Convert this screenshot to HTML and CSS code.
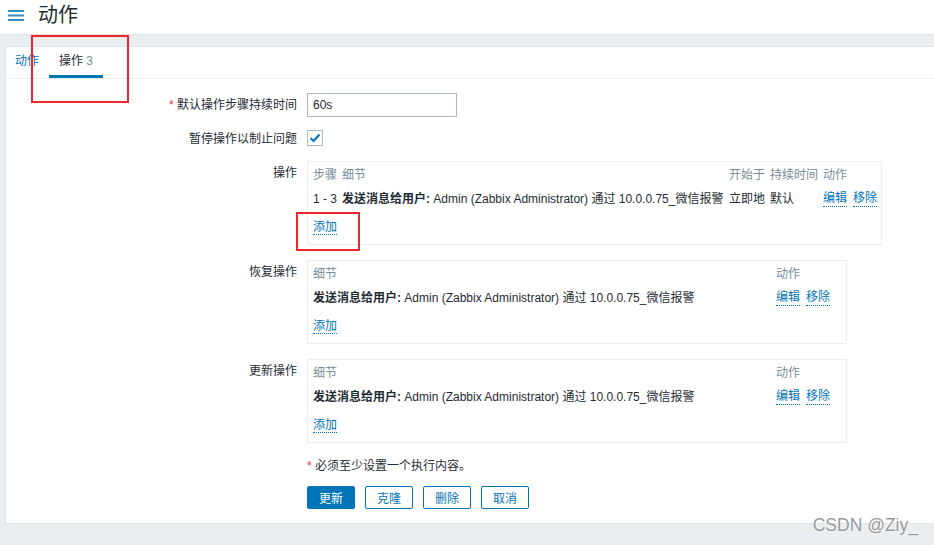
FILE: index.html
```html
<!DOCTYPE html>
<html lang="zh-CN">
<head>
    <meta charset="UTF-8">
    <meta name="viewport" content="width=device-width, initial-scale=1.0">
    <title>动作</title>
    <link rel="stylesheet" href="styles.css">
</head>
<body>
    <header class="page-header">
        <span class="menu-toggle">
            <svg width="16" height="12" viewBox="0 0 16 12">
                <rect x="0" y="1" width="16" height="2" fill="#3a8ac2"/>
                <rect x="0" y="5.5" width="16" height="2" fill="#3a8ac2"/>
                <rect x="0" y="10" width="16" height="2" fill="#3a8ac2"/>
            </svg>
        </span>
        <h1>动作</h1>
    </header>

    <main class="wrapper">
        <div class="panel">
            <ul class="tabs">
                <li class="tab"><a href="#">动作</a></li>
                <li class="tab active">操作 <span class="count">3</span></li>
            </ul>

            <div class="form-grid">
                <label class="form-label"><span class="req">*</span> 默认操作步骤持续时间</label>
                <div class="form-field"><input class="text-input" type="text" value="60s"></div>

                <label class="form-label">暂停操作以制止问题</label>
                <div class="form-field">
                    <span class="checkbox">
                        <svg width="12" height="10" viewBox="0 0 12 10">
                            <path d="M1.5 5 L4.5 8 L10.5 1.5" fill="none" stroke="#0275b8" stroke-width="2"/>
                        </svg>
                    </span>
                </div>

                <label class="form-label">操作</label>
                <div class="form-field">
                    <div class="ops-box wide">
                        <table class="ops-table">
                            <tr>
                                <th class="shrink">步骤</th>
                                <th>细节</th>
                                <th class="shrink">开始于</th>
                                <th class="shrink">持续时间</th>
                                <th class="shrink last">动作</th>
                            </tr>
                            <tr>
                                <td class="shrink">1 - 3</td>
                                <td><b>发送消息给用户:</b> Admin (Zabbix Administrator) 通过 10.0.0.75_微信报警</td>
                                <td class="shrink">立即地</td>
                                <td class="shrink">默认</td>
                                <td class="shrink last"><span class="row-actions"><a href="#">编辑</a><a href="#">移除</a></span></td>
                            </tr>
                        </table>
                        <div class="add-row"><a href="#">添加</a></div>
                    </div>
                </div>

                <label class="form-label">恢复操作</label>
                <div class="form-field">
                    <div class="ops-box">
                        <table class="ops-table">
                            <tr>
                                <th>细节</th>
                                <th class="shrink end">动作</th>
                            </tr>
                            <tr>
                                <td><b>发送消息给用户:</b> Admin (Zabbix Administrator) 通过 10.0.0.75_微信报警</td>
                                <td class="shrink end"><span class="row-actions"><a href="#">编辑</a><a href="#">移除</a></span></td>
                            </tr>
                        </table>
                        <div class="add-row"><a href="#">添加</a></div>
                    </div>
                </div>

                <label class="form-label">更新操作</label>
                <div class="form-field">
                    <div class="ops-box">
                        <table class="ops-table">
                            <tr>
                                <th>细节</th>
                                <th class="shrink end">动作</th>
                            </tr>
                            <tr>
                                <td><b>发送消息给用户:</b> Admin (Zabbix Administrator) 通过 10.0.0.75_微信报警</td>
                                <td class="shrink end"><span class="row-actions"><a href="#">编辑</a><a href="#">移除</a></span></td>
                            </tr>
                        </table>
                        <div class="add-row"><a href="#">添加</a></div>
                    </div>
                </div>

                <div></div>
                <div class="form-note"><span class="req">*</span> 必须至少设置一个执行内容。</div>

                <div></div>
                <div class="form-buttons">
                    <button class="btn primary">更新</button>
                    <button class="btn">克隆</button>
                    <button class="btn">删除</button>
                    <button class="btn">取消</button>
                </div>
            </div>
        </div>
    </main>

    <!-- screenshot annotations -->
    <div class="mark mark-tab"></div>
    <div class="mark mark-add"></div>
    <div class="watermark">CSDN @Ziy_</div>
</body>
</html>
```

FILE: styles.css
```css
* {
    margin: 0;
    padding: 0;
    box-sizing: border-box;
}

body {
    font-family: "Liberation Sans", Arial, "Noto Sans CJK SC", sans-serif;
    font-size: 12px;
    color: #1f2c33;
    background: #ebeef0;
    height: 545px;
    position: relative;
    overflow: hidden;
}

a {
    color: #0275b8;
    text-decoration: none;
    border-bottom: 1px dotted #0275b8;
}

/* Header */
.page-header {
    height: 35px;
    background: #fff;
    border-bottom: 1px solid #dfe4e7;
    display: flex;
    align-items: center;
}

.menu-toggle {
    display: flex;
    margin: -4px 0 0 8px;
}

.page-header h1 {
    font-size: 20px;
    font-weight: normal;
    margin: -5px 0 0 14px;
    line-height: 24px;
}

/* Panel */
.wrapper {
    padding: 11px 0 0 5px;
}

.panel {
    background: #fff;
    border: 1px solid #dfe4e7;
    border-right: none;
    padding-bottom: 14px;
}

.tabs {
    list-style: none;
    display: flex;
    margin-left: -1px;
    border-bottom: 1px solid #ebeef0;
}

.tab {
    padding: 0 10px;
    line-height: 28px;
    border-bottom: 3px solid transparent;
}

.tab a {
    border-bottom: none;
}

.tab.active {
    border-bottom-color: #0275b8;
}

.tab .count {
    color: #768d99;
}

/* Form */
.form-grid {
    display: grid;
    grid-template-columns: 291px 1fr;
    column-gap: 10px;
    row-gap: 10px;
    padding-top: 14px;
}

.form-label {
    text-align: right;
    line-height: 24px;
    white-space: nowrap;
}

.req {
    color: #e33734;
}

.text-input {
    width: 150px;
    height: 24px;
    border: 1px solid #acbbc2;
    padding: 0 5px;
    font-family: inherit;
    font-size: 12px;
    color: #1f2c33;
    outline: none;
}

.checkbox {
    display: flex;
    align-items: center;
    justify-content: center;
    width: 16px;
    height: 16px;
    margin-top: 3px;
    border: 1px solid #acbbc2;
    background: #fff;
}

/* Operation lists */
.ops-box {
    width: 540px;
    border: 1px solid #ebeef0;
    margin-bottom: 5px;
}

.ops-box.wide {
    width: 575px;
}

.ops-table {
    width: 100%;
    border-collapse: collapse;
}

.ops-table th,
.ops-table td {
    text-align: left;
    padding: 4px 0 4px 5px;
    line-height: 16px;
    white-space: nowrap;
}

.ops-table th {
    font-weight: normal;
    color: #768d99;
    padding: 5px 0 3px 5px;
}

.ops-table .shrink {
    width: 1%;
}

.ops-table .last {
    padding-right: 4px;
}

.ops-table .end {
    padding-right: 16px;
}

.row-actions {
    display: inline-flex;
    gap: 6px;
}

.row-actions a {
    line-height: 15px;
}

.add-row {
    padding: 8px 5px 9px;
    line-height: 16px;
}

.add-row a {
    line-height: 15px;
}

.form-note {
    line-height: 16px;
}

.form-buttons {
    display: flex;
    gap: 10px;
    margin-top: 2px;
}

.btn {
    height: 23px;
    padding: 0 11px;
    border: 1px solid #0275b8;
    border-radius: 2px;
    background: #fff;
    color: #0275b8;
    font-family: inherit;
    font-size: 12px;
}

.btn.primary {
    background: #0275b8;
    color: #fff;
}

/* Annotations */
.mark {
    position: absolute;
    border: 2px solid #f0272a;
}

.mark-tab {
    left: 31px;
    top: 35px;
    width: 98px;
    height: 68px;
}

.mark-add {
    left: 296px;
    top: 212px;
    width: 64px;
    height: 39px;
}

.watermark {
    position: absolute;
    right: 16px;
    bottom: 10px;
    font-size: 17.5px;
    line-height: 20px;
    color: #9a9a9a;
    text-shadow: 0 0 2px #fff;
}
```
